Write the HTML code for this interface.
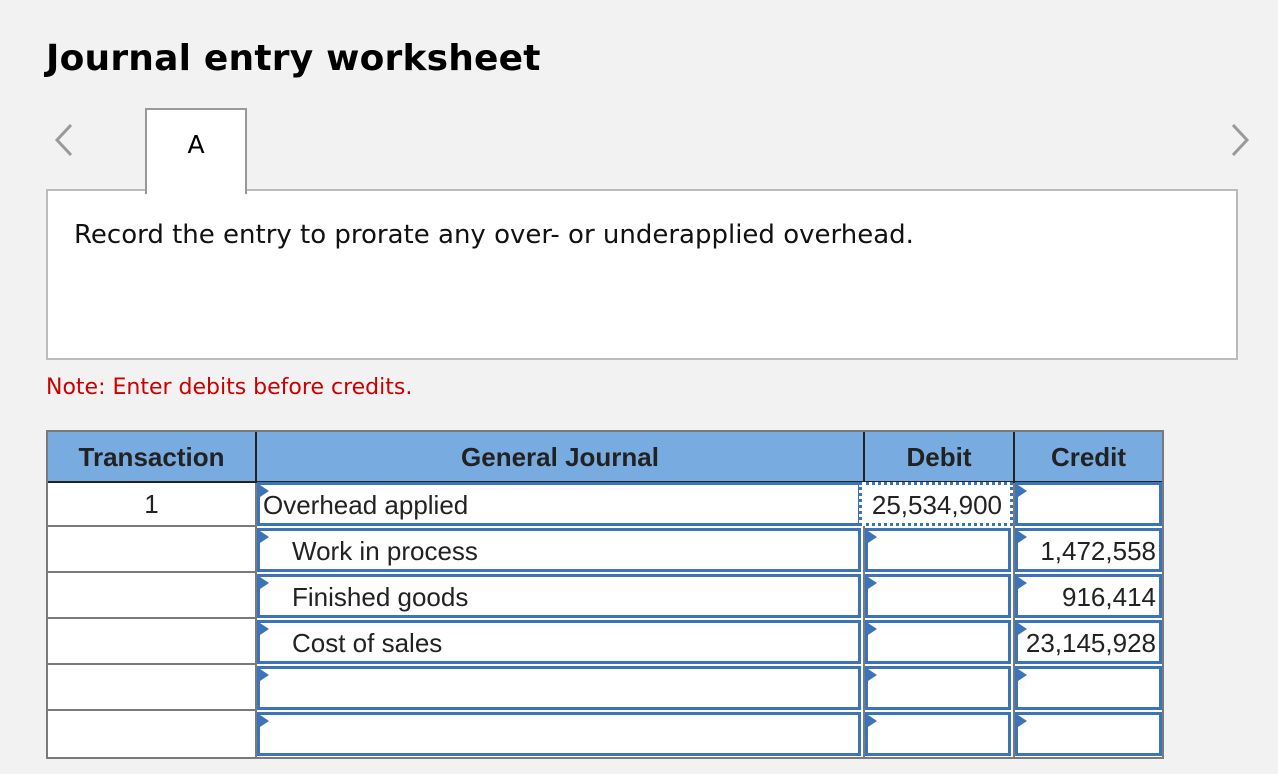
<!DOCTYPE html>
<html><head><meta charset="utf-8"><style>
body{margin:0;width:1278px;height:774px;background:#f2f2f2;position:relative;overflow:hidden;font-family:"DejaVu Sans",Verdana,sans-serif}
.a{position:absolute}
h1{position:absolute;left:46px;top:38px;margin:0;font-size:36px;font-weight:bold;letter-spacing:0.2px;color:#000}
.tab{left:145px;top:108px;width:98px;height:84px;background:#fff;border:2px solid #999;border-bottom:none;z-index:2;text-align:center;font-size:25px;line-height:70px}
.panel{left:46px;top:189px;width:1188px;height:167px;background:#fff;border:2px solid #bbb}
.rec{left:74px;top:220px;font-size:26px;color:#111;white-space:nowrap}
.note{left:46px;top:375px;font-size:22px;color:#c00}
.tbl{left:46px;top:430px;width:1114px;height:325px;background:#fff;border:2px solid #7a7a7a}
.hd{background:#78ace0;top:0;height:49px;border-bottom:2px solid #222;font-family:"Liberation Sans",Arial,sans-serif;font-weight:bold;font-size:26px;line-height:51px;text-align:center;color:#222}
.cell{font-family:"Liberation Sans",Arial,sans-serif;font-size:26px;color:#222}
.in{position:absolute;background:#fff;border:3px solid #3b74b8;box-sizing:border-box;font-family:"Liberation Sans",Arial,sans-serif;font-size:26px;color:#222;line-height:40px;white-space:nowrap}
.tri{position:absolute;left:0;top:0;width:0;height:0;border-top:6px solid transparent;border-bottom:6px solid transparent;border-left:9px solid #3b74b8}
</style></head><body>
<h1>Journal entry worksheet</h1>
<svg class="a" style="left:52px;top:123px" width="24" height="34"><path d="M19 2 L5 17 L19 32" stroke="#999" stroke-width="3" fill="none"/></svg>
<svg class="a" style="left:1228px;top:123px" width="24" height="34"><path d="M5 2 L19 17 L5 32" stroke="#999" stroke-width="3" fill="none"/></svg>
<div class="a tab">A</div>
<div class="a panel"></div>
<div class="a rec">Record the entry to prorate any over- or underapplied overhead.</div>
<div class="a note">Note: Enter debits before credits.</div>
<div class="a tbl">
 <div class="a hd" style="left:0;width:207px;border-right:2px solid #222">Transaction</div>
 <div class="a hd" style="left:209px;width:606px;border-right:2px solid #222">General Journal</div>
 <div class="a hd" style="left:817px;width:148px;border-right:2px solid #222">Debit</div>
 <div class="a hd" style="left:967px;width:147px">Credit</div>
 <div class="a" style="left:207px;top:51px;width:2px;height:274px;background:#7a7a7a"></div>
 <div class="a" style="left:815px;top:51px;width:2px;height:274px;background:#7a7a7a"></div>
 <div class="a" style="left:965px;top:51px;width:2px;height:274px;background:#7a7a7a"></div>
</div>
<div id="rows"></div>
<script>
var rows=[["1","Overhead applied",0,"25,534,900",""],["","Work in process",1,"","1,472,558"],["","Finished goods",1,"","916,414"],["","Cost of sales",1,"","23,145,928"],["","",0,"",""],["","",0,"",""]];
var h="";
rows.forEach(function(r,i){var y=481+i*46;
 if(i>0)h+='<div class="a" style="left:48px;top:'+(y-2)+'px;width:207px;height:2px;background:#7a7a7a"></div>';
 h+='<div class="a cell" style="left:48px;top:'+y+'px;width:207px;height:44px;line-height:46px;text-align:center">'+r[0]+'</div>';
 h+='<div class="in" style="left:257px;top:'+(y+1)+'px;width:604px;height:44px;padding-left:'+(r[2]?32:3)+'px"><span class="tri"></span>'+r[1]+'</div>';
 if(i==0){h+='<div class="in" style="left:859px;top:'+(y+1)+'px;width:154px;height:44px;border:3px dotted #3b74b8;text-align:right;padding-right:8px">'+r[3]+'</div>';}
 else h+='<div class="in" style="left:865px;top:'+(y+1)+'px;width:146px;height:44px"><span class="tri"></span></div>';
 h+='<div class="in" style="left:1015px;top:'+(y+1)+'px;width:147px;height:44px;text-align:right;padding-right:3px"><span class="tri"></span>'+r[4]+'</div>';
});
document.getElementById("rows").innerHTML=h;
</script>
</body></html>
